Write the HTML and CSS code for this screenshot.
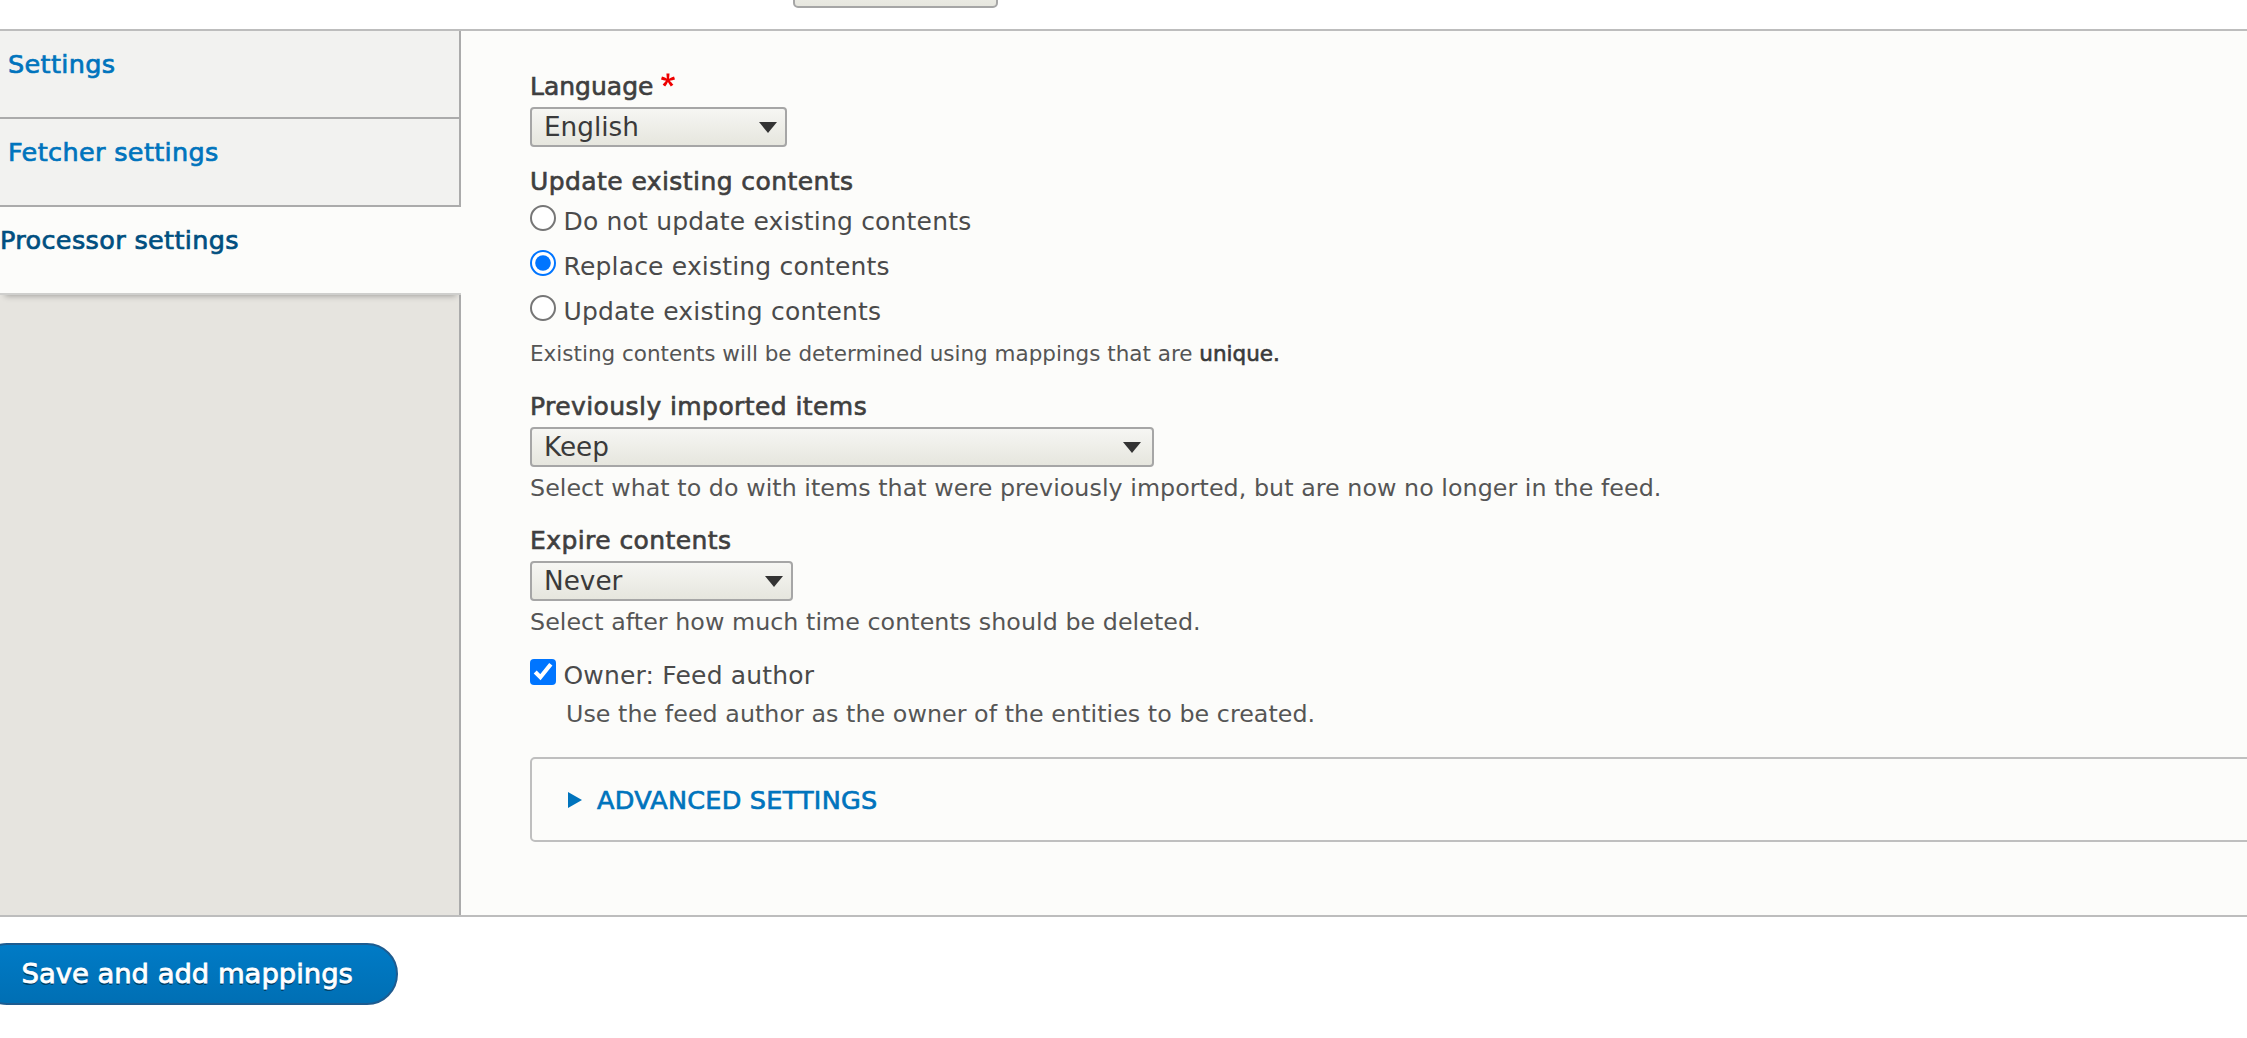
FILE: index.html
```html
<!DOCTYPE html>
<html lang="en">
<head>
<meta charset="utf-8">
<title>Processor settings</title>
<link rel="stylesheet" href="styles.css">
</head>
<body>
<div class="topbar"><div class="prev-control"></div></div>
<div class="vtabs">
  <ul class="vtabs-menu">
    <li class="vtab"><a class="vtab-link" href="#">Settings</a></li>
    <li class="vtab"><a class="vtab-link" href="#">Fetcher settings</a></li>
    <li class="vtab is-selected"><a class="vtab-link" href="#">Processor settings</a></li>
  </ul>
  <div class="vtabs-pane">
    <div class="field field-first">
      <div class="label">Language<span class="required"><svg width="14" height="14" viewBox="0 0 16 16"><path fill="#e00" d="M0,7.562l1.114-3.438c2.565,0.906,4.43,1.688,5.59,2.35C6.398,3.553,6.237,1.544,6.22,0.447h3.511c-0.05,1.597-0.234,3.6-0.558,6.003c1.664-0.838,3.566-1.613,5.714-2.325L16,7.562c-2.05,0.678-4.06,1.131-6.028,1.356c0.984,0.856,2.372,2.381,4.166,4.575l-2.906,2.059c-0.935-1.274-2.041-3.009-3.316-5.206c-1.194,2.275-2.244,4.013-3.147,5.206l-2.856-2.059c1.872-2.307,3.211-3.832,4.017-4.575C3.849,8.516,1.872,8.062,0,7.562"/></svg></span></div>
      <div class="select select-lang"><span>English</span><svg class="arrow" width="18" height="11" viewBox="0 0 18 11"><polygon points="0,0 18,0 9,11" fill="#333"/></svg></div>
    </div>

    <div class="field field-radios">
      <div class="label label-wide">Update existing contents</div>
      <div class="radios">
        <label class="check-row"><input class="native" type="radio" name="update"><span>Do not update existing contents</span></label>
        <label class="check-row"><input class="native" type="radio" name="update" checked><span>Replace existing contents</span></label>
        <label class="check-row"><input class="native" type="radio" name="update"><span>Update existing contents</span></label>
      </div>
      <div class="desc-small">Existing contents will be determined using mappings that are <strong class="strong">unique.</strong></div>
    </div>

    <div class="field field-previous">
      <div class="label label-wide">Previously imported items</div>
      <div class="select select-keep"><span>Keep</span><svg class="arrow" width="18" height="11" viewBox="0 0 18 11"><polygon points="0,0 18,0 9,11" fill="#333"/></svg></div>
      <div class="desc">Select what to do with items that were previously imported, but are now no longer in the feed.</div>
    </div>

    <div class="field field-expire">
      <div class="label label-wide">Expire contents</div>
      <div class="select select-never"><span>Never</span><svg class="arrow" width="18" height="11" viewBox="0 0 18 11"><polygon points="0,0 18,0 9,11" fill="#333"/></svg></div>
      <div class="desc">Select after how much time contents should be deleted.</div>
    </div>

    <div class="field field-owner">
      <label class="check-row"><input class="native" type="checkbox" checked><span>Owner: Feed author</span></label>
      <div class="desc desc-indent">Use the feed author as the owner of the entities to be created.</div>
    </div>

    <div class="details">
      <div class="summary"><svg class="summary-arrow" width="14" height="16" viewBox="0 0 14 16"><polygon points="0,0 14,8 0,16" fill="#0074bd"/></svg><span class="summary-text">ADVANCED SETTINGS</span></div>
    </div>
  </div>
</div>
<div class="actions"><button class="btn-primary" type="button">Save and add mappings</button></div>
</body>
</html>
```

FILE: styles.css
```css
html, body {
  margin: 0;
  padding: 0;
  overflow: hidden;
  background: #ffffff;
}

body {
  font-family: "DejaVu Sans", "Lucida Sans Unicode", "Lucida Grande", sans-serif;
  color: #444444;
  font-size: 25px;
}

/* top strip with the bottom of a previous control */
.topbar {
  display: flex;
  height: 29px;
  padding-left: 793px;
}

.prev-control {
  width: 205px;
  height: 40px;
  margin-top: -32px;
  box-sizing: border-box;
  border: 2px solid #a6a6a6;
  border-radius: 5px;
  background: linear-gradient(#f6f6f3, #e7e7df);
}

/* vertical tabs */
.vtabs {
  display: flex;
  border-top: 2px solid #bdbdbd;
  border-bottom: 2px solid #bdbdbd;
}

.vtabs-menu {
  flex: none;
  width: 459px;
  margin: 0;
  padding: 0;
  list-style: none;
  background: #e6e4df;
  border-right: 2px solid #ababab;
}

.vtab {
  height: 68px;
  padding: 18px 0 0 8px;
  background: #f2f2f0;
  border-bottom: 2px solid #ababab;
}

.vtab-link {
  display: block;
  font-size: 25.5px;
  line-height: 30px;
  letter-spacing: 0.35px;
  color: #0074bd;
  text-decoration: none;
  -webkit-text-stroke: 0.7px currentColor;
  white-space: nowrap;
}

.vtab.is-selected {
  padding-left: 0;
  margin-right: -2px;
  background: #fcfcfa;
  border-bottom-color: #cfcfcd;
  box-shadow: 0 6px 6px -5px rgba(0, 0, 0, 0.3);
}

.vtab.is-selected .vtab-link {
  color: #004f80;
}

/* pane */
.vtabs-pane {
  flex: 1;
  min-width: 0;
  background: #fcfcfa;
  padding: 41px 0 73px 69px;
}

.field-radios { margin-top: 20px; }
.field-previous { margin-top: 25px; }
.field-expire { margin-top: 23px; }
.field-owner { margin-top: 22px; }

.label {
  font-size: 25px;
  line-height: 30px;
  color: #3f3f3f;
  -webkit-text-stroke: 0.65px currentColor;
  margin-bottom: 5px;
  white-space: nowrap;
}

.label-wide { letter-spacing: 0.42px; }

.field-radios .label { margin-bottom: 8px; }

.required {
  display: inline-block;
  width: 14px;
  height: 14px;
  margin-left: 8px;
  vertical-align: 8px;
}

.required svg { display: block; }

.select {
  display: flex;
  align-items: center;
  justify-content: space-between;
  box-sizing: border-box;
  height: 40px;
  padding: 0 8px 0 12px;
  border: 2px solid #a6a6a6;
  border-radius: 4px;
  background: linear-gradient(#f6f6f3, #e6e6de);
  font-size: 26.3px;
  color: #3a3a3a;
}

.select-lang { width: 257px; }
.select-keep { width: 624px; padding-right: 11px; }
.select-never { width: 263px; }

.arrow { display: block; flex: none; }

.radios {
  display: flex;
  flex-direction: column;
  gap: 11px;
}

.check-row {
  display: flex;
  align-items: flex-start;
  gap: 7.5px;
  font-size: 25px;
  line-height: 34px;
  letter-spacing: 0.18px;
  color: #4a4a4a;
  white-space: nowrap;
}

.native {
  zoom: 2;
  margin: 0;
  flex: none;
}

.desc-small {
  margin-top: 11px;
  font-size: 21.5px;
  line-height: 27px;
  color: #555555;
  white-space: nowrap;
}

.strong {
  font-weight: normal;
  color: #3a3a3a;
  -webkit-text-stroke: 0.6px currentColor;
}

.desc {
  margin-top: 6px;
  font-size: 23.75px;
  line-height: 30px;
  letter-spacing: 0.05px;
  color: #555555;
  white-space: nowrap;
}

.desc-indent {
  margin-top: 5.5px;
  padding-left: 36px;
}

/* details */
.details {
  margin-top: 28.5px;
  margin-right: -20px;
  border: 2px solid #bfbfbf;
  border-radius: 5px;
}

.summary {
  display: flex;
  align-items: center;
  padding: 26px 0 25px 36px;
  line-height: 30px;
}

.summary-arrow {
  display: block;
  flex: none;
  margin-right: 15px;
}

.summary-text {
  font-size: 25.5px;
  letter-spacing: 0.25px;
  color: #0074bd;
  -webkit-text-stroke: 0.7px currentColor;
  white-space: nowrap;
}

/* actions */
.actions {
  padding-top: 26px;
}

.btn-primary {
  display: block;
  height: 62px;
  margin: 0 0 0 -24px;
  padding: 0 43px 0 43.5px;
  box-sizing: border-box;
  border: 2px solid #1e5c90;
  border-radius: 31px;
  background: linear-gradient(#007bc6, #006fb4);
  color: #ffffff;
  font-family: "DejaVu Sans", "Lucida Sans Unicode", sans-serif;
  font-size: 27.4px;
  line-height: 30px;
  -webkit-text-stroke: 0.8px currentColor;
  text-shadow: 0 2px 0 rgba(0, 0, 0, 0.45);
  white-space: nowrap;
}
```
